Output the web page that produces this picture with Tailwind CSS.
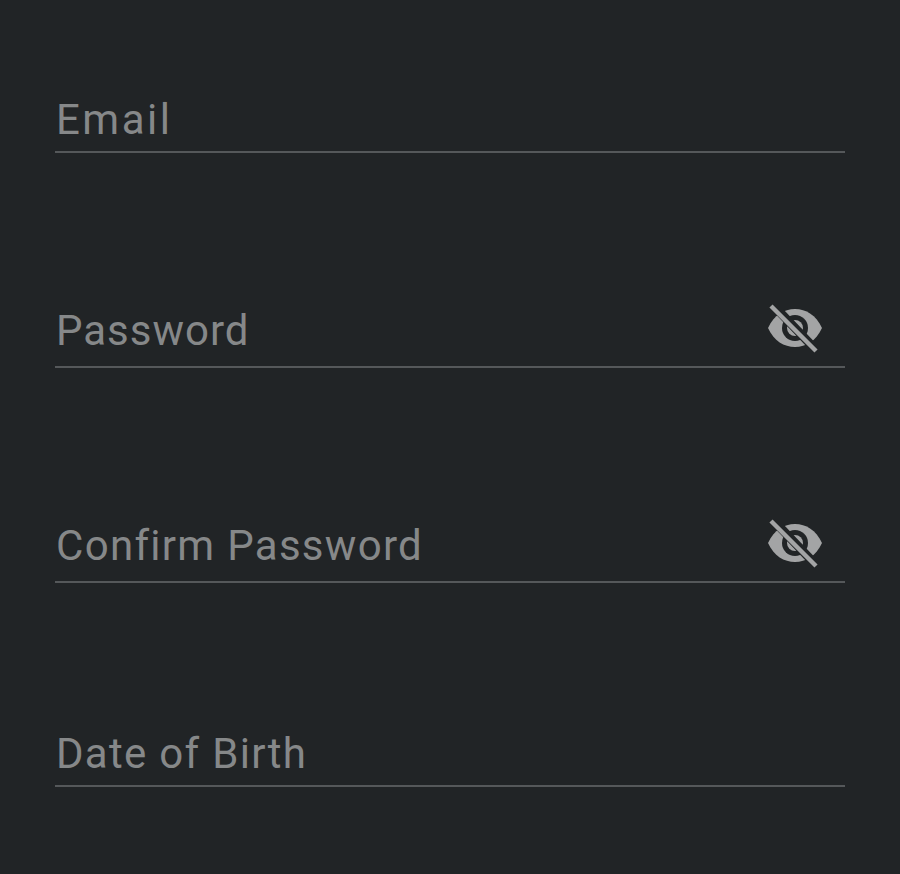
<!DOCTYPE html>
<html lang="en">
<head>
    <meta charset="UTF-8">
    <title>Sign up</title>
    <script src="https://cdn.jsdelivr.net/npm/@tailwindcss/browser@4"></script>
</head>
<body class="bg-[#212426] h-[874px] overflow-hidden font-['Roboto',sans-serif] font-normal text-[#868889] text-[42px] tracking-[1px]">
    <div class="px-[55px]">
        <div class="h-[153px] flex items-end border-b-2 border-[#55585a] pl-[1px]"><span class="tracking-[2.5px]">Email</span></div>
        <div class="mt-[153px] h-[62px] flex items-end justify-between border-b-2 border-[#55585a] pb-[4px] pl-[1px]">
            <span>Password</span>
            <svg class="w-[56px] h-[50px] mr-[22px] mb-[9px]" viewBox="0 0 56 50">
                <path fill="#a3a4a5" d="M1 25C7 12 17 6 28 6s21 6 27 19c-6 13-16 19-27 19S7 38 1 25z"/>
                <circle cx="28" cy="25" r="13" fill="#212426"/>
                <circle cx="28" cy="25" r="8" fill="#a3a4a5"/>
                <path d="M6 2l44 46" stroke="#212426" stroke-width="9"/>
                <path d="M4 3l45 45" stroke="#a3a4a5" stroke-width="4.5"/>
            </svg>
        </div>
        <div class="mt-[153px] h-[62px] flex items-end justify-between border-b-2 border-[#55585a] pb-[4px] pl-[1px]">
            <span class="tracking-[1.3px]">Confirm Password</span>
            <svg class="w-[56px] h-[50px] mr-[22px] mb-[9px]" viewBox="0 0 56 50">
                <path fill="#a3a4a5" d="M1 25C7 12 17 6 28 6s21 6 27 19c-6 13-16 19-27 19S7 38 1 25z"/>
                <circle cx="28" cy="25" r="13" fill="#212426"/>
                <circle cx="28" cy="25" r="8" fill="#a3a4a5"/>
                <path d="M6 2l44 46" stroke="#212426" stroke-width="9"/>
                <path d="M4 3l45 45" stroke="#a3a4a5" stroke-width="4.5"/>
            </svg>
        </div>
        <div class="mt-[142px] h-[62px] flex items-end border-b-2 border-[#55585a] pl-[1px]"><span class="tracking-[1.3px]">Date of Birth</span></div>
    </div>
</body>
</html>
